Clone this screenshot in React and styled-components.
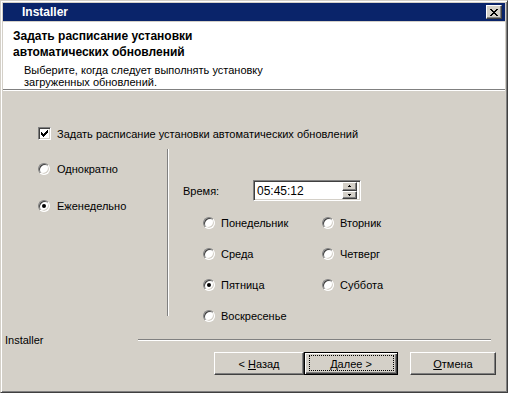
import React from "react";
import styled, { createGlobalStyle, css } from "styled-components";

const Global = createGlobalStyle`
  html, body { margin: 0; padding: 0; background: #d4d0c8; }
  body { font-family: "Liberation Sans", Arial, sans-serif; }
`;

const Window = styled.div`
  width: 508px;
  height: 393px;
  box-sizing: border-box;
  background: #d4d0c8;
  border: 1px solid;
  border-color: #d4d0c8 #404040 #404040 #d4d0c8;
  box-shadow: inset 1px 1px #ffffff, inset -1px -1px #808080;
  padding: 2px;
  display: flex;
  flex-direction: column;
  font-family: "Liberation Sans", Arial, sans-serif;
  font-size: 11px;
  color: #000;
`;

const TitleBar = styled.div`
  height: 18px;
  flex: none;
  background: #0a246a;
  display: flex;
  align-items: center;
  padding: 0 3px 0 19px;
  margin-bottom: 1px;
  color: #fff;
  font-weight: bold;
  font-size: 12px;
`;

const TitleText = styled.span`
  flex: 1;
`;

const CloseBtn = styled.div`
  width: 16px;
  height: 14px;
  box-sizing: border-box;
  background: #d4d0c8;
  border: 1px solid;
  border-color: #ffffff #404040 #404040 #ffffff;
  box-shadow: inset -1px -1px #808080;
  display: flex;
  align-items: center;
  justify-content: center;
  padding-right: 1px;
`;

const Header = styled.div`
  height: 67px;
  flex: none;
  box-sizing: border-box;
  background: #fff;
  padding: 6px 10px 0;
`;

const HeaderTitle = styled.div`
  font-weight: bold;
  font-size: 12px;
  line-height: 16px;
`;

const HeaderSub = styled.div`
  margin: 4px 0 0 11px;
  line-height: 12px;
`;

const HSep = styled.div`
  flex: none;
  height: 0;
  border-top: 1px solid #808080;
  border-bottom: 1px solid #ffffff;
  margin: ${p => p.$margin || "0"};
  ${p => p.$grow && css`flex: 1;`}
`;

const Body = styled.div`
  flex: 1;
  padding: 36px 0 0 35px;
  display: flex;
  flex-direction: column;
`;

const OptionRow = styled.label`
  display: flex;
  align-items: center;
  gap: ${p => p.$gap || 6}px;
  height: 13px;
  white-space: nowrap;
`;

const CheckBox = styled.span`
  width: 13px;
  height: 13px;
  flex: none;
  box-sizing: border-box;
  background: #fff;
  border: 1px solid;
  border-color: #808080 #ffffff #ffffff #808080;
  box-shadow: inset 1px 1px #404040, inset -1px -1px #d4d0c8;
  display: flex;
  align-items: center;
  justify-content: center;
`;

const RadioCircle = styled.span`
  width: 12px;
  height: 12px;
  flex: none;
  box-sizing: border-box;
  border-radius: 50%;
  background: #fff;
  border: 1px solid;
  border-color: #808080 #ffffff #ffffff #808080;
  box-shadow: inset 1px 1px #404040, inset -1px -1px #d4d0c8;
  position: relative;
  &::after {
    content: "";
    display: ${p => (p.$checked ? "block" : "none")};
    position: absolute;
    left: 3px;
    top: 3px;
    width: 4px;
    height: 4px;
    border-radius: 50%;
    background: #000;
  }
`;

const Lower = styled.div`
  display: flex;
  margin-top: 9px;
  height: 167px;
`;

const LeftCol = styled.div`
  width: 129px;
  flex: none;
  padding-top: 13px;
  display: flex;
  flex-direction: column;
  gap: 24px;
`;

const VSep = styled.div`
  width: 0;
  border-left: 1px solid #808080;
  border-right: 1px solid #ffffff;
`;

const RightCol = styled.div`
  padding: 31px 0 0 14px;
  display: flex;
  flex-direction: column;
`;

const TimeRow = styled.div`
  display: flex;
  align-items: center;
`;

const TimeLabel = styled.span`
  width: 70px;
`;

const SpinBox = styled.div`
  width: 108px;
  height: 21px;
  box-sizing: border-box;
  background: #fff;
  border: 1px solid;
  border-color: #808080 #ffffff #ffffff #808080;
  box-shadow: inset 1px 1px #404040, inset -1px -1px #d4d0c8;
  display: flex;
  align-items: center;
  padding: 1px 3px 1px 3px;
  font-size: 12px;
`;

const SpinValue = styled.span`
  flex: 1;
`;

const SpinCol = styled.div`
  width: 15px;
  height: 17px;
  display: flex;
  flex-direction: column;
`;

const SpinBtn = styled.div`
  flex: 1;
  box-sizing: border-box;
  background: #d4d0c8;
  border: 1px solid;
  border-color: #ffffff #404040 #404040 #ffffff;
  box-shadow: inset -1px -1px #808080;
  display: flex;
  align-items: center;
  justify-content: center;
`;

const DayGrid = styled.div`
  display: grid;
  grid-template-columns: 119px auto;
  grid-auto-rows: 13px;
  row-gap: 18px;
  margin: 15px 0 0 20px;
`;

const Footer = styled.div`
  flex: none;
  display: flex;
  flex-direction: column;
  padding-bottom: 15px;
`;

const FooterRow = styled.div`
  display: flex;
  align-items: center;
  height: 13px;
`;

const FooterLabel = styled.span`
  width: 133px;
  flex: none;
  padding-left: 2px;
`;

const ButtonRow = styled.div`
  display: flex;
  justify-content: flex-end;
  margin-top: 6px;
  padding-right: 9px;
`;

const Button = styled.button`
  width: ${p => p.$w}px;
  height: 23px;
  box-sizing: border-box;
  margin-left: ${p => p.$ml || 0}px;
  padding: 0;
  background: #d4d0c8;
  color: #000;
  font-family: "Liberation Sans", Arial, sans-serif;
  font-size: 11px;
  border: 1px solid;
  border-color: #ffffff #404040 #404040 #ffffff;
  box-shadow: inset -1px -1px #808080, inset 1px 1px #d4d0c8;
  position: relative;
  ${p =>
    p.$default &&
    css`
      border: 1px solid #000;
      box-shadow: inset 1px 1px #ffffff, inset -1px -1px #404040,
        inset -2px -2px #808080;
      &::after {
        content: "";
        position: absolute;
        top: 2px;
        bottom: 3px;
        left: 4px;
        right: 3px;
        border: 1px dotted #000;
      }
    `}
`;

const PixelIcon = ({ rows, color = "#000" }) => {
  const w = rows[0].length;
  const h = rows.length;
  const rects = [];
  rows.forEach((r, y) =>
    r.split("").forEach((c, x) => {
      if (c === "X") rects.push(<rect key={`${x}-${y}`} x={x} y={y} width="1" height="1" fill={color} />);
    })
  );
  return (
    <svg width={w} height={h} viewBox={`0 0 ${w} ${h}`} shapeRendering="crispEdges" style={{ display: "block" }}>
      {rects}
    </svg>
  );
};

const CHECK = [
  "......X",
  ".....XX",
  "X...XXX",
  "XX.XXX.",
  "XXXXX..",
  ".XXX...",
  "..X....",
];

const CLOSE_X = [
  "XX....XX",
  ".XX..XX.",
  "..XXXX..",
  "...XX...",
  "..XXXX..",
  ".XX..XX.",
  "XX....XX",
];

const UP = ["..X..", ".XXX."];
const DOWN = [".XXX.", "..X.."];

const Radio = ({ checked, label, gap }) => (
  <OptionRow $gap={gap}>
    <RadioCircle $checked={checked} />
    <span>{label}</span>
  </OptionRow>
);

const days = [
  { label: "Понедельник" },
  { label: "Вторник" },
  { label: "Среда" },
  { label: "Четверг" },
  { label: "Пятница", checked: true },
  { label: "Суббота" },
  { label: "Воскресенье" },
];

export default function App() {
  return (
    <>
      <Global />
      <Window>
        <TitleBar>
          <TitleText>Installer</TitleText>
          <CloseBtn>
            <PixelIcon rows={CLOSE_X} />
          </CloseBtn>
        </TitleBar>
        <Header>
          <HeaderTitle>
            Задать расписание установки
            <br />
            автоматических обновлений
          </HeaderTitle>
          <HeaderSub>
            Выберите, когда следует выполнять установку
            <br />
            загруженных обновлений.
          </HeaderSub>
        </Header>
        <HSep />
        <Body>
          <OptionRow $gap={6}>
            <CheckBox>
              <PixelIcon rows={CHECK} />
            </CheckBox>
            <span>Задать расписание установки автоматических обновлений</span>
          </OptionRow>
          <Lower>
            <LeftCol>
              <Radio label="Однократно" gap={7} />
              <Radio label="Еженедельно" gap={7} checked />
            </LeftCol>
            <VSep />
            <RightCol>
              <TimeRow>
                <TimeLabel>Время:</TimeLabel>
                <SpinBox>
                  <SpinValue>05:45:12</SpinValue>
                  <SpinCol>
                    <SpinBtn>
                      <PixelIcon rows={UP} />
                    </SpinBtn>
                    <SpinBtn>
                      <PixelIcon rows={DOWN} />
                    </SpinBtn>
                  </SpinCol>
                </SpinBox>
              </TimeRow>
              <DayGrid>
                {days.map(d => (
                  <Radio key={d.label} label={d.label} checked={d.checked} gap={6} />
                ))}
              </DayGrid>
            </RightCol>
          </Lower>
        </Body>
        <Footer>
          <FooterRow>
            <FooterLabel>Installer</FooterLabel>
            <HSep $grow $margin="0 14px 0 0" />
          </FooterRow>
          <ButtonRow>
            <Button $w={90}>
              &lt; <u>Н</u>азад
            </Button>
            <Button $w={94} $default>
              <u>Д</u>алее &gt;
            </Button>
            <Button $w={86} $ml={12}>
              <u>О</u>тмена
            </Button>
          </ButtonRow>
        </Footer>
      </Window>
    </>
  );
}
